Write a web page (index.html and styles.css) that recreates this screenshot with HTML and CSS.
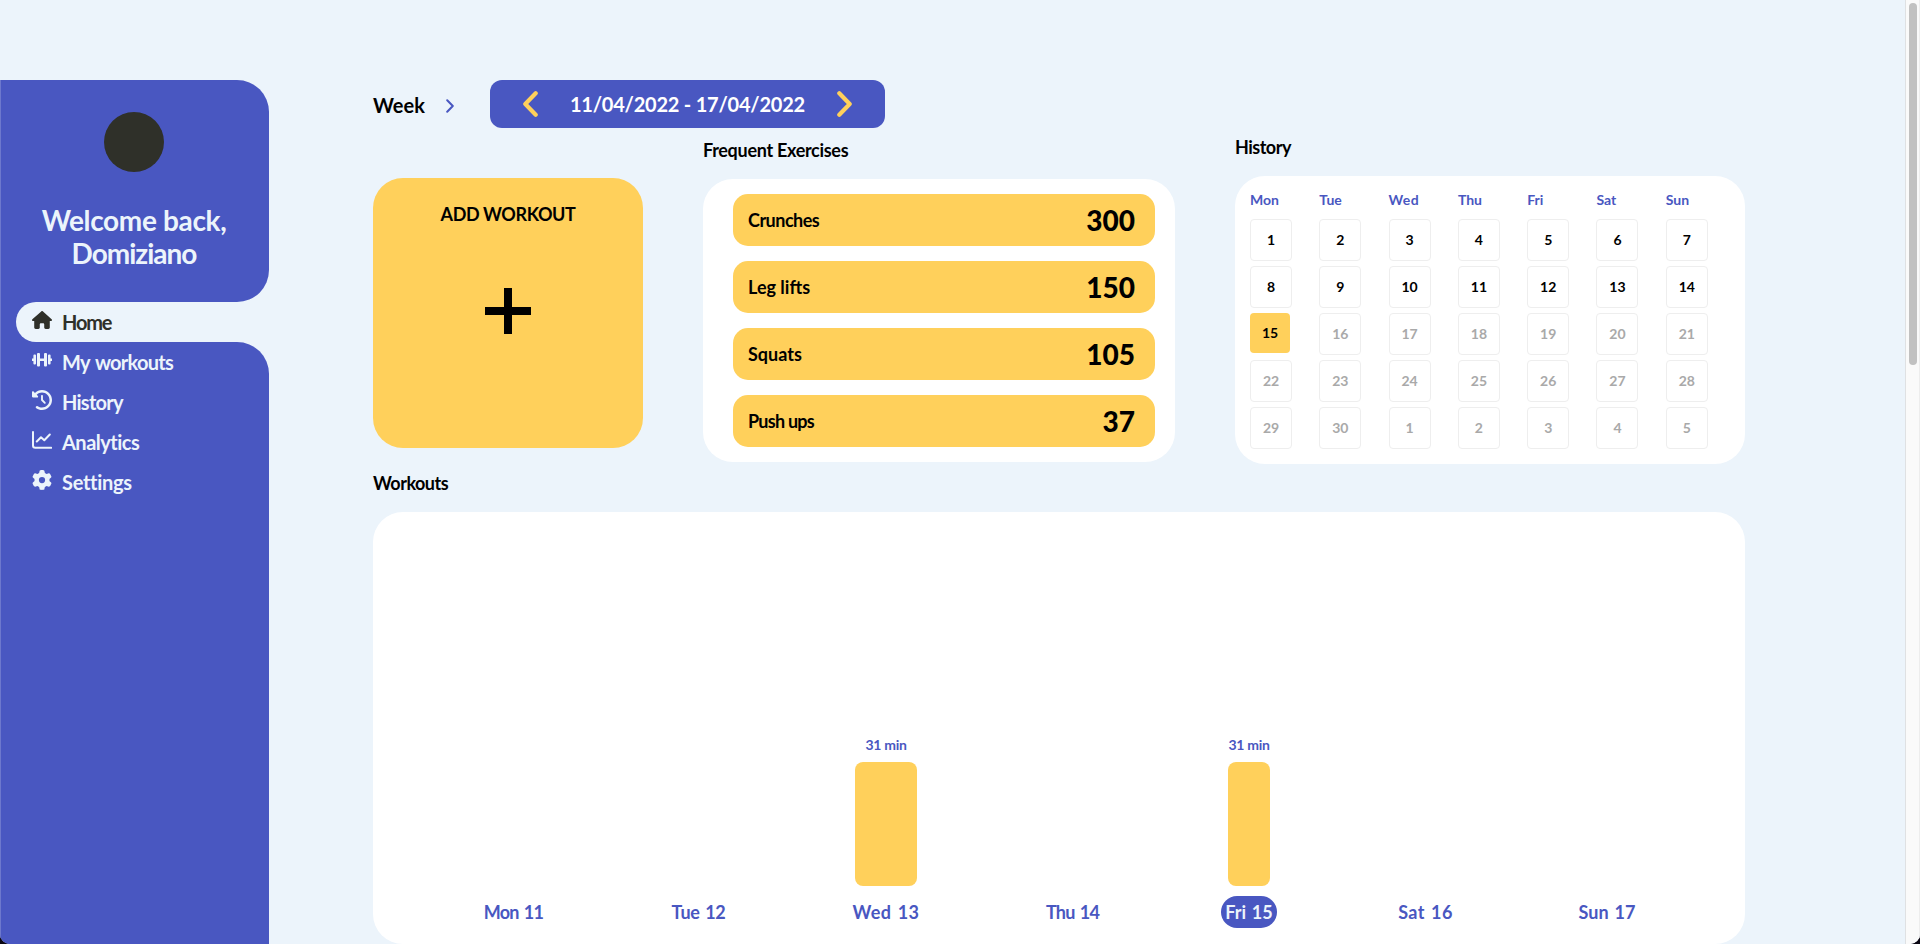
FILE: index.html
```html
<!DOCTYPE html>
<html lang="en">
<head>
<meta charset="utf-8">
<title>Workout dashboard</title>
<link rel="stylesheet" href="styles.css">
</head>
<body>
<div class="window">
  <aside class="sidebar">
    <section class="profile">
      <div class="avatar"></div>
      <h1 class="welcome">Welcome back,<br><span class="name">Domiziano</span></h1>
    </section>
    <nav class="menu">
      <a class="item active"><svg class="icon" viewBox="0 0 576 512"><path d="M575.8 255.5c0 18-15 32.1-32 32.1h-32l.7 160.2c0 2.7-.2 5.4-.5 8.1V472c0 22.1-17.9 40-40 40H392c-22.1 0-40-17.9-40-40V384c0-17.7-14.3-32-32-32H256c-17.7 0-32 14.3-32 32v88c0 22.1-17.9 40-40 40H104c-22.1 0-40-17.9-40-40V287.600H32c-18 0-32-14-32-32.100c0-9 3-17 10-24L266.400 8c7-7 15-8 22-8s15 2 21 7L564.800 231.500c8 7 12 15 11 24z"/></svg><span class="tight-4">Home</span></a>
      <div class="rest">
        <a class="item"><svg class="icon" viewBox="0 0 20 18"><path d="M1.400 4.500Q1.400 3.500 2.400 3.500H3Q4 3.500 4 4.500V12.500Q4 13.500 3 13.500H2.400Q1.400 13.500 1.400 12.500V10H0V7.500H1.400ZM5 3Q5 2 6 2H7Q8 2 8 3V7.500H12V3Q12 2 13 2H14Q15 2 15 3V14.500Q15 15.500 14 15.500H13Q12 15.500 12 14.500V10H8V14.500Q8 15.500 7 15.500H6Q5 15.500 5 14.500ZM16 4.500Q16 3.500 17 3.500H17.600Q18.600 3.500 18.600 4.500V7.500H20V10H18.600V12.500Q18.600 13.500 17.600 13.500H17Q16 13.500 16 12.500Z"/></svg><span class="tight-3 spaced">My workouts</span></a>
        <a class="item"><svg class="icon" viewBox="0 0 512 512"><path d="M75 75L41 41C25.900 25.900 0 36.600 0 57.900V168c0 13.300 10.700 24 24 24H134.100c21.400 0 32.100-25.900 17-41l-30.800-30.800C155 85.500 203 64 256 64c106 0 192 86 192 192s-86 192-192 192c-40.800 0-78.600-12.700-109.700-34.400c-14.500-10.100-34.400-6.600-44.600 7.900s-6.600 34.400 7.900 44.600C151.200 495 201.700 512 256 512c141.400 0 256-114.600 256-256S397.400 0 256 0C185.300 0 121.300 28.700 75 75zm181 53c-13.300 0-24 10.700-24 24V256c0 6.400 2.500 12.500 7 17l72 72c9.400 9.400 24.600 9.400 33.900 0s9.400-24.600 0-33.900l-65-65V152c0-13.300-10.700-24-24-24z"/></svg><span class="tight-3">History</span></a>
        <a class="item"><svg class="icon line" viewBox="0 0 20 18"><path d="M1 1V14.500Q1 16.800 3.300 16.800H19.200M4.800 10.500L9 6.300L12.300 9.200L17.800 3.500"/></svg><span class="tight-2">Analytics</span></a>
        <a class="item"><svg class="icon" viewBox="0 0 512 512"><path d="M495.900 166.600c3.200 8.700 .5 18.400-6.400 24.600l-43.300 39.400c1.100 8.300 1.700 16.800 1.700 25.400s-.6 17.100-1.700 25.400l43.300 39.400c6.900 6.200 9.600 15.900 6.400 24.600c-4.400 11.900-9.700 23.300-15.800 34.300l-4.700 8.100c-6.600 11-14 21.400-22.100 31.200c-5.900 7.200-15.700 9.600-24.500 6.800l-55.700-17.700c-13.400 10.300-28.200 18.900-44 25.400l-12.500 57.100c-2 9.100-9 16.300-18.200 17.800c-13.800 2.300-28 3.500-42.500 3.500s-28.700-1.200-42.500-3.500c-9.200-1.500-16.200-8.700-18.200-17.800l-12.500-57.100c-15.800-6.500-30.600-15.100-44-25.400L83.100 425.900c-8.800 2.800-18.600 .3-24.500-6.800c-8.100-9.800-15.500-20.200-22.100-31.200l-4.700-8.100c-6.100-11-11.400-22.400-15.800-34.300c-3.200-8.700-.5-18.400 6.400-24.600l43.300-39.400C64.600 273.100 64 264.600 64 256s.6-17.100 1.700-25.400L22.400 191.200c-6.900-6.200-9.600-15.900-6.400-24.600c4.400-11.900 9.700-23.300 15.800-34.300l4.700-8.100c6.600-11 14-21.400 22.100-31.200c5.900-7.200 15.700-9.600 24.500-6.800l55.700 17.700c13.400-10.300 28.200-18.900 44-25.400l12.500-57.100c2-9.100 9-16.300 18.200-17.800C227.300 1.200 241.500 0 256 0s28.700 1.200 42.500 3.500c9.200 1.500 16.200 8.700 18.200 17.800l12.500 57.100c15.800 6.500 30.600 15.100 44 25.400l55.700-17.700c8.800-2.800 18.600-.3 24.500 6.800c8.100 9.800 15.500 20.200 22.100 31.200l4.700 8.100c6.100 11 11.400 22.400 15.800 34.300zM256 336a80 80 0 1 0 0-160 80 80 0 1 0 0 160z"/></svg><span class="tight-1">Settings</span></a>
      </div>
    </nav>
  </aside>

  <main class="main">
    <header class="topbar">
      <span class="period">Week</span>
      <svg class="period-arrow" viewBox="0 0 8 14"><path d="M1.200 1.200L6.800 7L1.200 12.800"/></svg>
      <div class="range">
        <svg class="arrow" viewBox="0 0 15 26"><path d="M12.700 2.300L2.300 13L12.700 23.700"/></svg>
        <span class="dates">11/04/2022 - 17/04/2022</span>
        <svg class="arrow" viewBox="0 0 15 26"><path d="M2.300 2.300L12.700 13L2.300 23.700"/></svg>
      </div>
    </header>

    <div class="overview">
      <button class="add">
        <span class="add-title">ADD WORKOUT</span>
        <svg class="plus" viewBox="0 0 46 46"><path d="M19 0H27V19H46V27H27V46H19V27H0V19H19Z"/></svg>
      </button>

      <section class="frequent">
        <h2 class="label tight-1">Frequent Exercises</h2>
        <ul class="exercises">
          <li><span class="tight-2">Crunches</span><b>300</b></li>
          <li><span>Leg lifts</span><b>150</b></li>
          <li><span>Squats</span><b>105</b></li>
          <li><span class="tight-3">Push ups</span><b>37</b></li>
        </ul>
      </section>

      <section class="history">
        <h2 class="label tight-2">History</h2>
        <div class="calendar">
          <span class="dow">Mon</span><span class="dow">Tue</span><span class="dow wide">Wed</span><span class="dow">Thu</span><span class="dow">Fri</span><span class="dow">Sat</span><span class="dow">Sun</span>
          <span class="day">1</span><span class="day">2</span><span class="day">3</span><span class="day">4</span><span class="day">5</span><span class="day">6</span><span class="day">7</span>
          <span class="day">8</span><span class="day">9</span><span class="day">10</span><span class="day">11</span><span class="day">12</span><span class="day">13</span><span class="day">14</span>
          <span class="day today">15</span><span class="day off">16</span><span class="day off">17</span><span class="day off">18</span><span class="day off">19</span><span class="day off">20</span><span class="day off">21</span>
          <span class="day off">22</span><span class="day off">23</span><span class="day off">24</span><span class="day off">25</span><span class="day off">26</span><span class="day off">27</span><span class="day off">28</span>
          <span class="day off">29</span><span class="day off">30</span><span class="day off">1</span><span class="day off">2</span><span class="day off">3</span><span class="day off">4</span><span class="day off">5</span>
        </div>
      </section>
    </div>

    <section class="workouts">
      <h2 class="label tight-2">Workouts</h2>
      <div class="chart">
        <div class="col"><span class="date tight-3">Mon 11</span></div>
        <div class="col"><span class="date tight-1">Tue 12</span></div>
        <div class="col"><span class="mins">31 min</span><div class="bar"></div><span class="date wide">Wed 13</span></div>
        <div class="col"><span class="date tight-3">Thu 14</span></div>
        <div class="col"><span class="mins">31 min</span><div class="bar narrow"></div><span class="date current">Fri 15</span></div>
        <div class="col"><span class="date wide">Sat 16</span></div>
        <div class="col"><span class="date">Sun 17</span></div>
      </div>
    </section>
  </main>

  <div class="scrollbar"><div class="thumb"></div></div>
</div>
</body>
</html>
```

FILE: styles.css
```css
:root {
  --blue: #4957c1;
  --yellow: #ffd05b;
  --pale: #ecf4fb;
  --dark: #2f3029;
}

* { box-sizing: border-box; }

html { background: #0a0612; }

body {
  margin: 0;
  font-family: Lato, "Open Sans", sans-serif;
  font-weight: 700;
  color: #000;
}

.window {
  display: flex;
  height: 944px;
  overflow: hidden;
  background: var(--pale);
  border-radius: 0 0 10px 10px;
}

/* letter fitting */
.tight-1 { letter-spacing: -0.3px; }
.tight-2 { letter-spacing: -0.5px; }
.tight-3 { letter-spacing: -0.75px; }
.tight-4 { letter-spacing: -1.2px; }
.spaced { word-spacing: 2px; }
.wide { letter-spacing: 0.4px; }

.sidebar {
  position: relative;
  display: flex;
  flex-direction: column;
  width: 269px;
  padding-top: 80px;
}

.sidebar::after {
  content: "";
  position: absolute;
  top: 80px;
  bottom: 0;
  left: 0;
  width: 1px;
  background: rgba(255, 255, 255, 0.2);
}

.profile {
  height: 222px;
  padding: 32px 1px 0 0;
  background: var(--blue);
  border-radius: 0 32px 32px 0;
  text-align: center;
}

.avatar {
  width: 60px;
  height: 60px;
  margin: 0 auto 32px;
  border-radius: 50%;
  background: var(--dark);
}

.welcome {
  margin: 0;
  font-size: 28px;
  line-height: 33px;
  font-weight: 700;
  letter-spacing: -0.35px;
  color: var(--pale);
}

.name { letter-spacing: -1px; }

.menu {
  display: flex;
  flex-direction: column;
  flex: 1;
  background: linear-gradient(90deg, var(--blue) 60px, transparent 60px);
}

.rest {
  flex: 1;
  background: var(--blue);
  border-radius: 0 32px 0 0;
}

.item {
  display: flex;
  align-items: center;
  gap: 10px;
  height: 40px;
  padding-left: 32px;
  font-size: 20px;
  line-height: 40px;
  color: var(--pale);
}

.active {
  margin-left: 16px;
  padding-left: 16px;
  border-radius: 20px 0 0 20px;
  background: var(--pale);
  color: var(--dark);
}

.icon {
  width: 20px;
  height: 20px;
  margin-bottom: 4px;
  fill: currentColor;
}

.line {
  fill: none;
  stroke: currentColor;
  stroke-width: 2;
  stroke-linecap: round;
  stroke-linejoin: round;
}

.main {
  width: 1476px;
  padding: 80px 0 0 104px;
}

.topbar {
  display: flex;
  align-items: center;
  height: 48px;
}

.period {
  width: 73px;
  padding-top: 1px;
  font-size: 20px;
  line-height: 50px;
}

.period-arrow {
  width: 8px;
  height: 14px;
  margin: 4px 36px 0 0;
  fill: none;
  stroke: var(--blue);
  stroke-width: 2;
  stroke-linecap: round;
  stroke-linejoin: round;
}

.range {
  display: flex;
  align-items: center;
  justify-content: space-between;
  width: 395px;
  height: 48px;
  padding: 0 33px;
  border-radius: 12px;
  background: var(--blue);
  color: #fff;
}

.arrow {
  width: 15px;
  height: 26px;
  fill: none;
  stroke: var(--yellow);
  stroke-width: 4.2;
  stroke-linecap: round;
  stroke-linejoin: round;
}

.dates {
  font-size: 20px;
  letter-spacing: -0.22px;
}

.overview {
  display: flex;
  align-items: flex-start;
}

.label {
  margin: 0 0 18px;
  font-size: 18px;
  line-height: 24px;
  font-weight: 700;
}

.add {
  display: flex;
  flex-direction: column;
  align-items: center;
  width: 270px;
  height: 270px;
  margin: 50px 60px 0 0;
  padding: 24px 0 0;
  border: 0;
  border-radius: 30px;
  background: var(--yellow);
  color: #000;
  font: inherit;
}

.add-title {
  font-size: 18px;
  line-height: 24px;
  letter-spacing: -0.4px;
}

.plus {
  width: 46px;
  height: 46px;
  margin-top: 62px;
}

.frequent {
  width: 472px;
  margin-right: 60px;
  padding-top: 10px;
}

.frequent .label,
.history .label { margin-bottom: 17px; }

.exercises {
  display: grid;
  gap: 15px;
  height: 283px;
  margin: 0;
  padding: 15px 20px 15px 30px;
  border-radius: 30px;
  background: #fff;
  list-style: none;
  font-size: 18px;
}

.exercises li {
  display: flex;
  align-items: center;
  justify-content: space-between;
  height: 52px;
  padding: 0 20px 0 15px;
  border-radius: 15px;
  background: var(--yellow);
}

.exercises b { font-size: 28px; }

.history {
  width: 510px;
  padding-top: 7px;
}

.calendar {
  display: grid;
  grid-template-columns: repeat(7, 69.3px);
  grid-template-rows: 28px;
  grid-auto-rows: 42px;
  row-gap: 5px;
  height: 288px;
  padding: 10px 15px;
  border-radius: 30px;
  background: #fff;
}

.dow {
  justify-self: start;
  font-size: 14px;
  line-height: 28px;
  color: var(--blue);
}

.day {
  width: 42px;
  height: 42px;
  border: 1px solid #eee;
  border-radius: 4px;
  text-align: center;
  font-size: 14px;
  line-height: 40px;
}

.off { color: #a9a9a9; }

.today {
  width: 40px;
  height: 40px;
  border: 0;
  background: var(--yellow);
}

.workouts { padding-top: 7px; }

.workouts .label { margin-bottom: 17px; }

.chart {
  display: grid;
  grid-template-columns: 185px 185px 190px 183px 170px 183px 180px;
  height: 432px;
  padding: 0 48px 16px;
  border-radius: 30px;
  background: #fff;
  color: var(--blue);
}

.col {
  display: flex;
  flex-direction: column;
  align-items: center;
  justify-content: flex-end;
}

.mins {
  font-size: 14px;
  line-height: 20px;
  letter-spacing: -0.3px;
}

.bar {
  width: 62px;
  height: 124px;
  margin: 7px 0 10px;
  border-radius: 8px;
  background: var(--yellow);
}

.narrow { width: 42px; }

.date {
  font-size: 18px;
  line-height: 32px;
  word-spacing: 1.5px;
}

.current {
  padding: 0 4.5px;
  border-radius: 16px;
  background: var(--blue);
  color: var(--pale);
}

.scrollbar {
  width: 15px;
  margin-left: auto;
  padding: 3px 0 0 3px;
  border-left: 1px solid #dfe1e3;
  border-right: 1px solid #ededed;
  background: #fafafa;
}

.thumb {
  width: 8px;
  height: 362px;
  border-radius: 4px;
  background: #c1c1c1;
}
```
